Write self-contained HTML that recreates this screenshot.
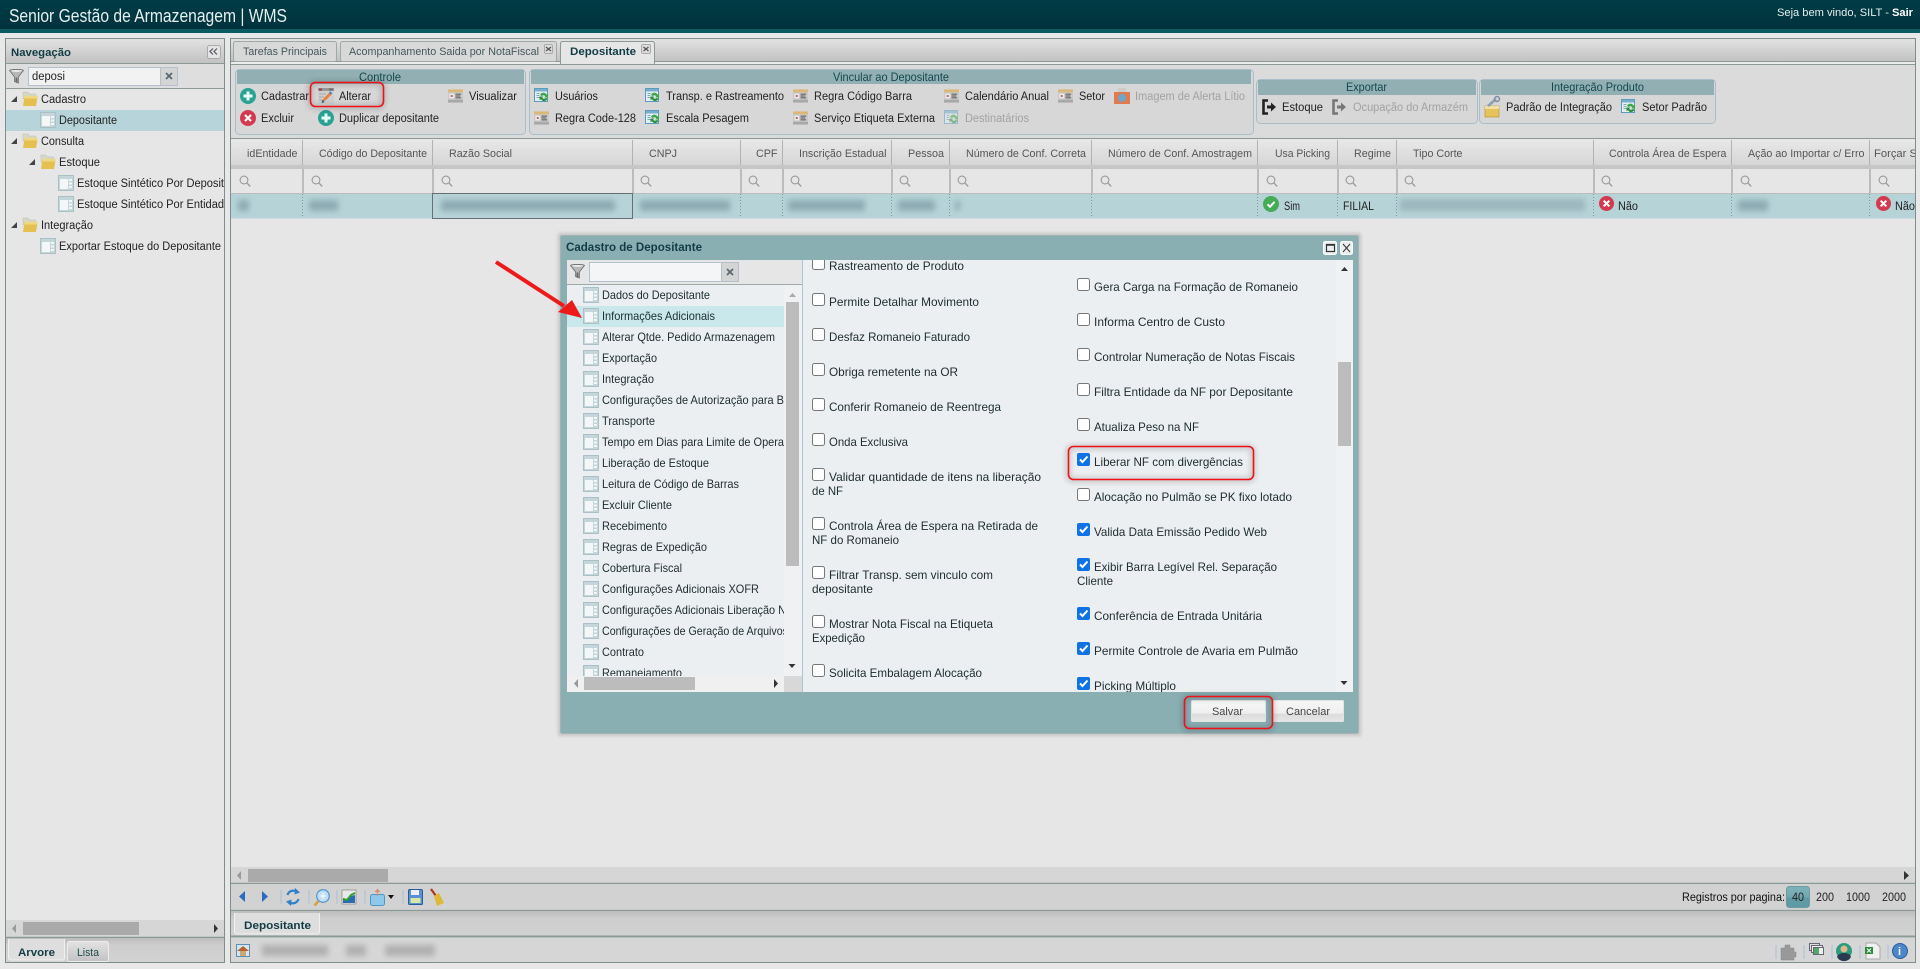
<!DOCTYPE html>
<html lang="pt-BR">
<head>
<meta charset="utf-8">
<title>Senior Gestão de Armazenagem | WMS</title>
<style>
html,body{margin:0;padding:0;width:1920px;height:969px;overflow:hidden;background:#e8e8e8}
svg{display:block;font-family:"Liberation Sans",Arial,sans-serif;font-size:11px;fill:#2a2a2a}
.h{fill:#555;font-size:11px}
.t{fill:#222;font-size:11.5px}
.b{font-weight:bold;fill:#123c44}
.g{fill:#a2a2a2}
.c{fill:#12484e;font-size:12px}
.d{fill:#1c2c30;font-size:12px}
</style>
</head>
<body>
<svg xmlns="http://www.w3.org/2000/svg" width="1920" height="969" viewBox="0 0 1920 969">
<defs>
<linearGradient id="ghd" x1="0" y1="0" x2="0" y2="1"><stop offset="0" stop-color="#003d47"/><stop offset="1" stop-color="#00323c"/></linearGradient>
<linearGradient id="gt" x1="0" y1="0" x2="0" y2="1"><stop offset="0" stop-color="#e2e2e2"/><stop offset="1" stop-color="#c2c2c2"/></linearGradient>
<linearGradient id="gb" x1="0" y1="0" x2="0" y2="1"><stop offset="0" stop-color="#bdbdbd"/><stop offset=".3" stop-color="#cdcdcd"/><stop offset="1" stop-color="#d2d2d2"/></linearGradient>
<linearGradient id="gh" x1="0" y1="0" x2="0" y2="1"><stop offset="0" stop-color="#e8e8e8"/><stop offset="1" stop-color="#d6d6d6"/></linearGradient>
<linearGradient id="gq" x1="0" y1="0" x2="0" y2="1"><stop offset="0" stop-color="#7db2b9"/><stop offset=".5" stop-color="#72a9b1"/><stop offset=".55" stop-color="#5f9ba4"/><stop offset="1" stop-color="#5f9ba4"/></linearGradient>
<linearGradient id="gw" x1="0" y1="0" x2="0" y2="1"><stop offset="0" stop-color="#f6f6f6"/><stop offset=".6" stop-color="#f0f0f0"/><stop offset=".65" stop-color="#dcdcdc"/><stop offset="1" stop-color="#e6e6e6"/></linearGradient>
<filter id="bl" x="-30%" y="-100%" width="160%" height="300%"><feGaussianBlur stdDeviation="3"/></filter>
<filter id="sh" x="-5%" y="-5%" width="110%" height="110%"><feGaussianBlur stdDeviation="3"/></filter>
<filter id="sd" x="-2%" y="-2%" width="104%" height="104%"><feGaussianBlur stdDeviation="1.500"/></filter>
<clipPath id="cNav"><rect x="6" y="89" width="218" height="830"/></clipPath>
<clipPath id="cDlgL"><rect x="567" y="285" width="217" height="391"/></clipPath>
<clipPath id="cDlgR"><rect x="803" y="260" width="532" height="432"/></clipPath>
<clipPath id="cGrid"><rect x="231" y="140" width="1684" height="80"/></clipPath>
<symbol id="pg" viewBox="0 0 16 16"><rect x=".5" y=".5" width="15" height="15" fill="#c4d6da" stroke="#a9c0c5"/><rect x="2" y="4" width="8" height="10" fill="#f3f7f8"/><rect x="11" y="4" width="3" height="2" fill="#f3f7f8"/><rect x="11" y="7.5" width="3" height="2" fill="#f3f7f8"/><rect x="11" y="11" width="3" height="2" fill="#f3f7f8"/></symbol>
<symbol id="fo" viewBox="0 0 16 16"><path d="M1 1h5l1 2h7v5H1z" fill="#d8d8c0" stroke="#bbb" stroke-width=".5"/><path d="M2.500 5h13.200L14 15H1z" fill="#e4c050"/><path d="M2.500 5h13.200l-.4 2.500H2.100z" fill="#f0d880"/></symbol>
<symbol id="pl" viewBox="0 0 16 16"><circle cx="8" cy="8" r="8" fill="#2aa293"/><path d="M8 3.500v9M3.500 8h9" stroke="#e8fff8" stroke-width="3"/></symbol>
<symbol id="xc" viewBox="0 0 16 16"><circle cx="8" cy="8" r="8" fill="#d33a50"/><path d="M5 5l6 6M11 5l-6 6" stroke="#fff" stroke-width="2.200"/></symbol>
<symbol id="ok" viewBox="0 0 16 16"><circle cx="8" cy="8" r="8" fill="#43ac55"/><path d="M4.500 8.300l2.500 2.500 4.500-5" stroke="#fff" stroke-width="2" fill="none"/></symbol>
<symbol id="tb" viewBox="0 0 16 14"><rect width="16" height="14" fill="#c9c9c9"/><rect width="16" height="3" fill="#dbb878"/><rect x="0" y="11" width="16" height="3" fill="#a8a8a8"/><rect x="1.500" y="4.500" width="5" height="5" fill="#e9e9e9"/><rect x="3" y="6" width="2" height="2" fill="#c05858"/><path d="M8 5h6M8 7h5M8 9h6" stroke="#555" stroke-width="1"/></symbol>
<symbol id="rf" viewBox="0 0 16 16"><rect x=".5" y=".5" width="13" height="13" fill="#e6f0f4" stroke="#5b9bc0"/><rect x="1" y="1" width="12" height="2.500" fill="#79aecb"/><path d="M2.500 5.500h3M2.500 7.500h3M2.500 9.500h3" stroke="#7ba8be"/><path d="M6 6.500c2-2.500 5-2.500 6.500 0l1.500-1v4h-4l1.300-1.200c-1-1.300-2.800-1.300-3.800 0z" fill="#41a64a"/><path d="M13.500 11c-2 2.800-5 2.800-6.500.3l-1.500 1V8.500h4L8.200 9.700c1 1.300 2.800 1.300 3.800 0z" fill="#2f8f3c"/></symbol>
<symbol id="ed" viewBox="0 0 16 16"><rect width="16" height="16" fill="#cfcfcf"/><rect width="16" height="3" fill="#9a9a9a"/><rect x="1" y=".5" width="3" height="2" fill="#b03838"/><rect x="11" y=".5" width="4" height="2" fill="#707070"/><path d="M1 6h7M1 9h5M1 12h4" stroke="#aaa"/><path d="M4 14l2-4 6-6 2 2-6 6z" fill="#e8803c"/><path d="M11 4.500l1.200-1.200 2 2-1.200 1.200z" fill="#3a7cc0"/><path d="M3.500 15l1-3.200 2.200 2.200z" fill="#3b5560"/></symbol>
<symbol id="ex" viewBox="0 0 14 16"><path d="M6 1.500H1.500v13H6" fill="none" stroke="#222" stroke-width="2.600"/><path d="M5 6.500h4V3.500L14 8l-5 4.500v-3H5z" fill="#222"/></symbol>
<symbol id="ex2" viewBox="0 0 14 16"><path d="M6 1.500H1.500v13H6" fill="none" stroke="#777" stroke-width="2.600"/><path d="M5 6.500h4V3.500L14 8l-5 4.500v-3H5z" fill="#777"/></symbol>
<symbol id="sr" viewBox="0 0 12 12"><circle cx="5" cy="5" r="3.900" fill="none" stroke="#9a9a9a" stroke-width="1.100"/><path d="M8 8l3.200 3.400" stroke="#9a9a9a" stroke-width="1.300"/></symbol>
<symbol id="fn" viewBox="0 0 16 16"><path d="M.5 1.500c2-1.500 13-1.500 15 0L10 8.500V15l-4-1.500V8.500z" fill="#b8b8b8" stroke="#666" stroke-width=".8"/><path d="M1.500 2c3-1 10-1 13 0-3 1.300-10 1.300-13 0z" fill="#f2f2f2"/><path d="M7 9v5l2 .6V9z" fill="#666"/></symbol>
</defs>

<!-- header -->
<rect width="1920" height="29" fill="url(#ghd)"/>
<rect y="29" width="1920" height="4" fill="#0a5c62"/>
<text x="9" y="22" font-size="18" fill="#e6eef0" textLength="278" lengthAdjust="spacingAndGlyphs">Senior Gestão de Armazenagem | WMS</text>
<text x="1777" y="16" fill="#e6eef0" textLength="136" lengthAdjust="spacingAndGlyphs">Seja bem vindo, SILT - <tspan font-weight="bold" fill="#fff">Sair</tspan></text>

<!-- left panel -->
<rect x="5.500" y="38.500" width="219" height="924" fill="#e6e6e6" stroke="#7e8f8b"/>
<rect x="6" y="39" width="218" height="24" fill="url(#gt)"/>
<path d="M6 63.500h218" stroke="#8c9a96"/>
<text x="11" y="56" class="b" font-size="11" textLength="60" lengthAdjust="spacingAndGlyphs">Navegação</text>
<rect x="207.500" y="45.500" width="13" height="13" rx="2" fill="#e4e4e4" stroke="#aaa"/>
<path d="M213 48.500l-3 3 3 3M217 48.500l-3 3 3 3" fill="none" stroke="#556" stroke-width="1.200"/>
<rect x="6" y="64" width="218" height="24" fill="#dedede"/>
<path d="M6 88.500h218" stroke="#909c98"/>
<use href="#fn" x="9" y="69" width="15" height="15"/>
<rect x="28.500" y="67.500" width="132" height="18" fill="#f2f2f2" stroke="#b4c0cc"/>
<rect x="160.500" y="67.500" width="17" height="18" fill="#d4d4d4" stroke="#b4c0cc"/>
<path d="M166 73l6 6M172 73l-6 6" stroke="#5a6a70" stroke-width="1.800"/>
<text x="32" y="80" class="t" font-size="12" textLength="33" lengthAdjust="spacingAndGlyphs">deposi</text>
<rect x="6" y="110" width="218" height="21" fill="#b6d4d9"/>
<g clip-path="url(#cNav)" class="t">
<path d="M11 102l6-6v6zM11 144l6-6v6zM29 165l6-6v6zM11 228l6-6v6z" fill="#444"/>
<use href="#fo" x="22" y="91" width="16" height="16"/>
<use href="#fo" x="22" y="133" width="16" height="16"/>
<use href="#fo" x="40" y="154" width="16" height="16"/>
<use href="#fo" x="22" y="217" width="16" height="16"/>
<use href="#pg" x="40" y="112" width="16" height="16"/>
<use href="#pg" x="58" y="175" width="16" height="16"/>
<use href="#pg" x="58" y="196" width="16" height="16"/>
<use href="#pg" x="40" y="238" width="16" height="16"/>
<text x="41" y="103" textLength="45" lengthAdjust="spacingAndGlyphs">Cadastro</text>
<text x="59" y="124" textLength="58" lengthAdjust="spacingAndGlyphs">Depositante</text>
<text x="41" y="145" textLength="43" lengthAdjust="spacingAndGlyphs">Consulta</text>
<text x="59" y="166" textLength="41" lengthAdjust="spacingAndGlyphs">Estoque</text>
<text x="77" y="187" textLength="147" lengthAdjust="spacingAndGlyphs">Estoque Sintético Por Deposit</text>
<text x="77" y="208" textLength="147" lengthAdjust="spacingAndGlyphs">Estoque Sintético Por Entidad</text>
<text x="41" y="229" textLength="52" lengthAdjust="spacingAndGlyphs">Integração</text>
<text x="59" y="250" textLength="162" lengthAdjust="spacingAndGlyphs">Exportar Estoque do Depositante</text>
</g>
<rect x="6" y="920" width="218" height="17" fill="#d6d6d6"/>
<rect x="23" y="922" width="116" height="13" fill="#aaa"/>
<path d="M16 924l-4 4.500 4 4.500z" fill="#999"/><path d="M214 924l4 4.500-4 4.500z" fill="#333"/>
<path d="M6 937.500h218" stroke="#8a9a96" stroke-width="1.500"/>
<rect x="6" y="938" width="218" height="24" fill="url(#gb)"/>
<path d="M8.500 939v19a2 2 0 0 0 2 2h52a2 2 0 0 0 2-2v-19" fill="#dedede" stroke="#f0f0f0"/>
<rect x="67.500" y="941.500" width="41" height="20" rx="2" fill="url(#gt)" stroke="#ececec"/>
<text x="18" y="956" class="b" textLength="37" lengthAdjust="spacingAndGlyphs">Arvore</text>
<text x="77" y="956" fill="#1f4a50" textLength="22" lengthAdjust="spacingAndGlyphs">Lista</text>

<!-- right panel -->
<rect x="230.500" y="38.500" width="1685" height="924" fill="#e6e6e6" stroke="#7e8f8b"/>
<rect x="231" y="39" width="1684" height="22" fill="url(#gt)"/>
<path d="M231 61.500h1684M231 64.500h1684" stroke="#8c9a96"/>
<rect x="231" y="62" width="1684" height="2" fill="#ececec"/>
<rect x="233.500" y="41.500" width="103" height="20" rx="2" fill="#d8d8d8" stroke="#9fa9a6"/>
<rect x="340.500" y="41.500" width="216" height="20" rx="2" fill="#d8d8d8" stroke="#9fa9a6"/>
<path d="M560.500 64v-20.500a2 2 0 0 1 2-2h90a2 2 0 0 1 2 2V64" fill="#e6e6e6" stroke="#8c9a96"/>
<text x="243" y="55" fill="#44585c" textLength="84" lengthAdjust="spacingAndGlyphs">Tarefas Principais</text>
<text x="349" y="55" fill="#44585c" textLength="190" lengthAdjust="spacingAndGlyphs">Acompanhamento Saida por NotaFiscal</text>
<text x="570" y="55" class="b" textLength="66" lengthAdjust="spacingAndGlyphs">Depositante</text>
<g fill="#ddd" stroke="#aaa"><rect x="544.500" y="44.500" width="8" height="9" rx="1.500"/><rect x="641.500" y="44.500" width="9" height="9" rx="1.500"/></g>
<path d="M546 47l5 4M551 47l-5 4M643.500 47l5 4M648.500 47l-5 4" stroke="#555" stroke-width="1.300"/>

<!-- toolbar -->
<rect x="231" y="65" width="1684" height="73" fill="#dbdbdb"/>
<path d="M231 138.500h1684" stroke="#8c9a96"/>
<g fill="#d7d7d7" stroke="#a9bdca">
<rect x="235.500" y="69.500" width="290" height="65" rx="4"/>
<rect x="529.500" y="69.500" width="724" height="65" rx="4"/>
<rect x="1256.500" y="79.500" width="221" height="44" rx="4"/>
<rect x="1479.500" y="79.500" width="236" height="44" rx="4"/>
</g>
<g fill="#92b0b3">
<rect x="237" y="70" width="287" height="14"/>
<rect x="531" y="70" width="720" height="14"/>
<rect x="1258" y="80" width="218" height="15"/>
<rect x="1481" y="80" width="233" height="15"/>
</g>
<g class="c">
<text x="359" y="81" textLength="42" lengthAdjust="spacingAndGlyphs">Controle</text>
<text x="833" y="81" textLength="116" lengthAdjust="spacingAndGlyphs">Vincular ao Depositante</text>
<text x="1346" y="91" textLength="41" lengthAdjust="spacingAndGlyphs">Exportar</text>
<text x="1551" y="91" textLength="93" lengthAdjust="spacingAndGlyphs">Integração Produto</text>
</g>
<use href="#pl" x="240" y="88" width="16" height="16"/>
<use href="#xc" x="240" y="110" width="16" height="16"/>
<use href="#ed" x="318" y="88" width="16" height="16"/>
<use href="#pl" x="318" y="110" width="16" height="16"/>
<use href="#tb" x="448" y="89" width="15" height="14"/>
<use href="#rf" x="534" y="88" width="16" height="16"/>
<use href="#tb" x="534" y="111" width="15" height="14"/>
<use href="#rf" x="645" y="88" width="16" height="16"/>
<use href="#rf" x="645" y="110" width="16" height="16"/>
<use href="#tb" x="793" y="89" width="15" height="14"/>
<use href="#tb" x="793" y="111" width="15" height="14"/>
<use href="#tb" x="944" y="89" width="15" height="14"/>
<use href="#rf" x="944" y="110" width="16" height="16" opacity=".5"/>
<use href="#tb" x="1058" y="89" width="15" height="14"/>
<g><rect x="1114" y="92" width="16" height="12" fill="#e07a50"/><rect x="1118" y="88" width="8" height="4" fill="#ccc"/><circle cx="1122" cy="98" r="4" fill="#6aa8c8"/></g>
<use href="#ex" x="1262" y="99" width="14" height="16"/>
<use href="#ex2" x="1332" y="99" width="14" height="16"/>
<g><rect x="1485" y="106" width="14" height="11" fill="#e6c25a" stroke="#b89030" stroke-width=".6"/><rect x="1485" y="106" width="14" height="3" fill="#f2e0a0"/><path d="M1488 106l8-7" stroke="#8aa0b0" stroke-width="2.500"/><circle cx="1497" cy="99" r="2.500" fill="none" stroke="#8090a0" stroke-width="1.500"/></g>
<use href="#rf" x="1621" y="99" width="16" height="16"/>
<g class="t" font-size="11.500">
<text x="261" y="100" textLength="48" lengthAdjust="spacingAndGlyphs">Cadastrar</text>
<text x="339" y="100" textLength="32" lengthAdjust="spacingAndGlyphs">Alterar</text>
<text x="469" y="100" textLength="48" lengthAdjust="spacingAndGlyphs">Visualizar</text>
<text x="261" y="122" textLength="33" lengthAdjust="spacingAndGlyphs">Excluir</text>
<text x="339" y="122" textLength="100" lengthAdjust="spacingAndGlyphs">Duplicar depositante</text>
<text x="555" y="100" textLength="43" lengthAdjust="spacingAndGlyphs">Usuários</text>
<text x="555" y="122" textLength="81" lengthAdjust="spacingAndGlyphs">Regra Code-128</text>
<text x="666" y="100" textLength="118" lengthAdjust="spacingAndGlyphs">Transp. e Rastreamento</text>
<text x="666" y="122" textLength="83" lengthAdjust="spacingAndGlyphs">Escala Pesagem</text>
<text x="814" y="100" textLength="98" lengthAdjust="spacingAndGlyphs">Regra Código Barra</text>
<text x="814" y="122" textLength="121" lengthAdjust="spacingAndGlyphs">Serviço Etiqueta Externa</text>
<text x="965" y="100" textLength="84" lengthAdjust="spacingAndGlyphs">Calendário Anual</text>
<text x="965" y="122" class="g" textLength="64" lengthAdjust="spacingAndGlyphs">Destinatários</text>
<text x="1079" y="100" textLength="26" lengthAdjust="spacingAndGlyphs">Setor</text>
<text x="1135" y="100" class="g" textLength="110" lengthAdjust="spacingAndGlyphs">Imagem de Alerta Lítio</text>
<text x="1282" y="111" textLength="41" lengthAdjust="spacingAndGlyphs">Estoque</text>
<text x="1353" y="111" class="g" textLength="115" lengthAdjust="spacingAndGlyphs">Ocupação do Armazém</text>
<text x="1506" y="111" textLength="106" lengthAdjust="spacingAndGlyphs">Padrão de Integração</text>
<text x="1642" y="111" textLength="65" lengthAdjust="spacingAndGlyphs">Setor Padrão</text>
</g>

<!-- grid -->
<rect x="231" y="140" width="1684" height="25" fill="url(#gh)"/>
<rect x="231" y="165" width="1684" height="4" fill="#c6c6c6"/>
<rect x="231" y="169" width="1684" height="24" fill="#e6e6e6"/>
<rect x="231" y="193" width="1684" height="1" fill="#bdbdbd"/>
<rect x="231" y="194" width="1684" height="24.500" fill="#b6d3d8"/>
<g stroke="#b2b2b2" stroke-width="1">
<path d="M302.500 140v25M432.500 140v25M632.500 140v25M740.500 140v25M782.500 140v25M891.500 140v25M949.500 140v25M1091.500 140v25M1257.500 140v25M1337.500 140v25M1396.500 140v25M1593.500 140v25M1731.500 140v25M1869.500 140v25"/>
</g>
<g stroke="#bcbcbc" stroke-width="2">
<path d="M303 169v24M433 169v24M633 169v24M741 169v24M783 169v24M892 169v24M950 169v24M1092 169v24M1258 169v24M1338 169v24M1397 169v24M1594 169v24M1732 169v24M1870 169v24"/>
</g>
<g stroke="#82979c" stroke-width="1" stroke-dasharray="1 2">
<path d="M302.500 194v24M740.500 194v24M782.500 194v24M891.500 194v24M949.500 194v24M1091.500 194v24M1257.500 194v24M1337.500 194v24M1396.500 194v24M1593.500 194v24M1731.500 194v24M1869.500 194v24"/>
</g>
<path d="M432.500 193.500h200v25h-200z" fill="none" stroke="#667074"/>
<g clip-path="url(#cGrid)">
<g class="h">
<text x="247" y="157" textLength="50.500" lengthAdjust="spacingAndGlyphs">idEntidade</text>
<text x="319" y="157" textLength="108" lengthAdjust="spacingAndGlyphs">Código do Depositante</text>
<text x="449" y="157" textLength="63" lengthAdjust="spacingAndGlyphs">Razão Social</text>
<text x="649" y="157" textLength="28" lengthAdjust="spacingAndGlyphs">CNPJ</text>
<text x="756" y="157" textLength="21.500" lengthAdjust="spacingAndGlyphs">CPF</text>
<text x="799" y="157" textLength="87.500" lengthAdjust="spacingAndGlyphs">Inscrição Estadual</text>
<text x="908" y="157" textLength="36" lengthAdjust="spacingAndGlyphs">Pessoa</text>
<text x="966" y="157" textLength="120" lengthAdjust="spacingAndGlyphs">Número de Conf. Correta</text>
<text x="1108" y="157" textLength="144" lengthAdjust="spacingAndGlyphs">Número de Conf. Amostragem</text>
<text x="1275" y="157" textLength="55" lengthAdjust="spacingAndGlyphs">Usa Picking</text>
<text x="1354" y="157" textLength="37" lengthAdjust="spacingAndGlyphs">Regime</text>
<text x="1413" y="157" textLength="49.500" lengthAdjust="spacingAndGlyphs">Tipo Corte</text>
<text x="1609" y="157" textLength="117.500" lengthAdjust="spacingAndGlyphs">Controla Área de Espera</text>
<text x="1748" y="157" textLength="116.500" lengthAdjust="spacingAndGlyphs">Ação ao Importar c/ Erro</text>
<text x="1874" y="157" textLength="43" lengthAdjust="spacingAndGlyphs">Forçar S</text>
</g>
<g>
<use href="#sr" x="239" y="175" width="12" height="12"/><use href="#sr" x="311" y="175" width="12" height="12"/><use href="#sr" x="441" y="175" width="12" height="12"/><use href="#sr" x="640" y="175" width="12" height="12"/><use href="#sr" x="748" y="175" width="12" height="12"/><use href="#sr" x="790" y="175" width="12" height="12"/><use href="#sr" x="899" y="175" width="12" height="12"/><use href="#sr" x="957" y="175" width="12" height="12"/><use href="#sr" x="1100" y="175" width="12" height="12"/><use href="#sr" x="1266" y="175" width="12" height="12"/><use href="#sr" x="1345" y="175" width="12" height="12"/><use href="#sr" x="1404" y="175" width="12" height="12"/><use href="#sr" x="1601" y="175" width="12" height="12"/><use href="#sr" x="1740" y="175" width="12" height="12"/><use href="#sr" x="1878" y="175" width="12" height="12"/>
</g>
<g filter="url(#bl)" fill="#8eabb3">
<rect x="238" y="200" width="11" height="11"/><rect x="309" y="200" width="29" height="11"/><rect x="441" y="200" width="174" height="11"/><rect x="640" y="200" width="90" height="11"/><rect x="788" y="200" width="77" height="11"/><rect x="898" y="200" width="37" height="11"/><rect x="955" y="201" width="5" height="9"/><rect x="1400" y="199" width="185" height="12" fill="#9cb8be"/><rect x="1738" y="200" width="30" height="11"/>
</g>
<use href="#ok" x="1263" y="196" width="16" height="16"/>
<text x="1284" y="210" class="t" textLength="16" lengthAdjust="spacingAndGlyphs">Sim</text>
<text x="1343" y="210" class="t" textLength="31" lengthAdjust="spacingAndGlyphs">FILIAL</text>
<use href="#xc" x="1599" y="196" width="15" height="15"/>
<text x="1618" y="210" class="t" textLength="20" lengthAdjust="spacingAndGlyphs">Não</text>
<use href="#xc" x="1876" y="196" width="15" height="15"/>
<text x="1895" y="210" class="t" textLength="20" lengthAdjust="spacingAndGlyphs">Não</text>
</g>

<!-- Grid bottom -->
<rect x="231" y="867" width="1684" height="16" fill="#d6d6d6"/>
<rect x="248" y="869" width="140" height="13" fill="#aaa"/>
<path d="M241 871l-4 4.500 4 4.500z" fill="#999"/><path d="M1904 871l5 4.500-5 4.500z" fill="#333"/>
<path d="M231 883.500h1684" stroke="#8a9a96" stroke-width="1.500"/>
<rect x="231" y="884" width="1684" height="26" fill="#d2d2d2"/>
<path d="M231 910.500h1684" stroke="#8a9a96" stroke-width="1.200"/>
<path d="M245 891l-6 5.500 6 5.500z" fill="#2c6cc0"/><path d="M262 891l6 5.500-6 5.500z" fill="#2c6cc0"/>
<path d="M281 890v14M309 890v14M337 890v14M365 890v14M403 890v14" stroke="#a8c0d8"/>
<g fill="none" stroke="#2f80c8" stroke-width="2.200"><path d="M287.500 895a6 6 0 0 1 9.500-3"/><path d="M298.500 899a6 6 0 0 1-9.500 3"/></g>
<path d="M295 888l5 4.500-5.500 2zM291 906l-5-4.500 5.500-2z" fill="#2f80c8"/>
<circle cx="323" cy="896" r="6.300" fill="#bfe0f8" stroke="#5a98d0" stroke-width="1.300"/><path d="M318.500 901l-4 4.500" stroke="#d8a040" stroke-width="2.500"/><path d="M320 896h6M323 893v6" stroke="#fff"/>
<rect x="342" y="890" width="14" height="14" fill="#e8e8e8" stroke="#777" stroke-width=".6"/><path d="M343 903v-5l4 2 4-4 4-1v8z" fill="#2a6cb0"/><path d="M343 899l4 1 4-5 4-2" fill="none" stroke="#30a030" stroke-width="2"/>
<rect x="370.500" y="894.500" width="14" height="11" rx="2" fill="#8fc8e8" stroke="#4a98c8"/><path d="M377.500 896v-5" stroke="#d89078" stroke-width="1.500"/><path d="M374.500 892l3-3.500 3 3.500z" fill="#d89078"/>
<path d="M388 895h6l-3 4z" fill="#111"/>
<rect x="408.500" y="889.500" width="14" height="15" rx="1" fill="#5c90d0" stroke="#2a5c9c"/><rect x="411" y="890" width="8" height="5" fill="#eef"/><rect x="410.500" y="898" width="10" height="5" fill="#d8e8a8"/>
<path d="M431 889l5 7" stroke="#a83820" stroke-width="2.200"/><path d="M434 896l5-3 5 10-7 3z" fill="#e0b838"/>
<text x="1682" y="901" fill="#111" font-size="11.500" textLength="103" lengthAdjust="spacingAndGlyphs">Registros por pagina:</text>
<rect x="1786.500" y="886.500" width="23" height="21" rx="3" fill="url(#gq)" stroke="#6d9aa0"/>
<g fill="#222" font-size="11.500">
<text x="1792" y="901" textLength="12" lengthAdjust="spacingAndGlyphs">40</text>
<text x="1816" y="901" textLength="18" lengthAdjust="spacingAndGlyphs">200</text>
<text x="1846" y="901" textLength="24" lengthAdjust="spacingAndGlyphs">1000</text>
<text x="1882" y="901" textLength="24" lengthAdjust="spacingAndGlyphs">2000</text>
</g>
<rect x="231" y="911" width="1684" height="25" fill="url(#gb)"/>
<path d="M234.500 913v19a2 2 0 0 0 2 2h81a2 2 0 0 0 2-2v-19" fill="#dedede" stroke="#f0f0f0"/>
<text x="244" y="929" class="b" textLength="67" lengthAdjust="spacingAndGlyphs">Depositante</text>
<path d="M231 936.500h1684" stroke="#8a9a96" stroke-width="2"/>
<rect x="231" y="938" width="1684" height="24" fill="#d6d6d6"/>
<rect x="236.500" y="944.500" width="13" height="12" fill="#d8e4ec" stroke="#5a90b8"/><path d="M237 951l6-5 6 5z" fill="#b86030"/><rect x="240" y="951" width="6" height="5" fill="#c8a878"/>
<g filter="url(#bl)" fill="#b0b0b0"><rect x="262" y="945" width="66" height="11"/><rect x="346" y="945" width="20" height="11"/><rect x="385" y="945" width="50" height="11"/></g>
<path d="M1776 945v14M1804 945v14M1832 945v14M1860 945v14M1888 945v14" stroke="#a8c0d8"/>
<path d="M1781 948h4v-3h5v3h4v4h2v5h-2v3h-13z" fill="#999" stroke="#888" stroke-width=".5"/>
<rect x="1809.500" y="943.500" width="10" height="7" fill="#ddd" stroke="#667"/><rect x="1811.500" y="945.500" width="11" height="7" fill="#eee" stroke="#667"/><rect x="1813.500" y="947.500" width="10" height="7" fill="#eee" stroke="#667"/><rect x="1814" y="948" width="5" height="6" fill="#52a868"/>
<circle cx="1844" cy="951" r="8" fill="#2c9d7c"/><path d="M1837 957c1-3 4-4 7-4s6 1 7 4a8 8 0 0 1-14 0z" fill="#2a3a50"/><circle cx="1844" cy="949" r="3.500" fill="#e0b890"/>
<path d="M1866 943h10l4 4v12h-14z" fill="#f0f0f0" stroke="#aaa"/><rect x="1865" y="947" width="8" height="7" fill="#2a8a3c"/><path d="M1867 948.500l4 4M1871 948.500l-4 4" stroke="#fff"/>
<circle cx="1900" cy="951" r="7.500" fill="#4a88c8" stroke="#2a5ca0"/><text x="1898" y="955" fill="#fff" font-size="11" font-weight="bold">i</text>

<!-- dialog -->
<rect x="558" y="233" width="803" height="503" fill="#000" opacity=".14" filter="url(#sd)"/>
<rect x="560.500" y="235.500" width="798" height="498" rx="2" fill="#8aafb3" stroke="#a4b4b4"/>
<text x="566" y="251" class="b" font-size="12" textLength="136" lengthAdjust="spacingAndGlyphs" fill="#1a3a42">Cadastro de Depositante</text>
<rect x="1323.500" y="241.500" width="13" height="13" rx="2" fill="#eaf0f0" stroke="#fff"/><rect x="1326.500" y="244.500" width="8" height="7" fill="none" stroke="#333" stroke-width="1.200"/><path d="M1326 245h9" stroke="#333" stroke-width="1.500"/>
<rect x="1340.500" y="241.500" width="12" height="13" rx="2" fill="#eaf0f0" stroke="#fff"/><path d="M1343 244l7 8M1350 244l-7 8" stroke="#333"/>
<rect x="567" y="260" width="786" height="432" fill="#eceff1"/>
<rect x="567" y="260" width="235" height="24" fill="#e6e6e6"/>
<path d="M567 284.500h235" stroke="#9fa9a8"/>
<path d="M802.500 260v432" stroke="#a9c4dc"/>
<use href="#fn" x="570" y="264" width="15" height="15"/>
<rect x="589.500" y="262.500" width="132" height="19" fill="#f3f5f6" stroke="#b4c0cc"/>
<rect x="721.500" y="262.500" width="17" height="19" fill="#d4d4d4" stroke="#b4c0cc"/>
<path d="M727 269l6 6M733 269l-6 6" stroke="#5a6a70" stroke-width="1.800"/>
<rect x="567" y="306" width="217" height="21" fill="#c8e8ec"/>
<g clip-path="url(#cDlgL)" class="d">
<use href="#pg" x="583" y="287" width="16" height="16"/><use href="#pg" x="583" y="308" width="16" height="16"/><use href="#pg" x="583" y="329" width="16" height="16"/><use href="#pg" x="583" y="350" width="16" height="16"/><use href="#pg" x="583" y="371" width="16" height="16"/><use href="#pg" x="583" y="392" width="16" height="16"/><use href="#pg" x="583" y="413" width="16" height="16"/><use href="#pg" x="583" y="434" width="16" height="16"/><use href="#pg" x="583" y="455" width="16" height="16"/><use href="#pg" x="583" y="476" width="16" height="16"/><use href="#pg" x="583" y="497" width="16" height="16"/><use href="#pg" x="583" y="518" width="16" height="16"/><use href="#pg" x="583" y="539" width="16" height="16"/><use href="#pg" x="583" y="560" width="16" height="16"/><use href="#pg" x="583" y="581" width="16" height="16"/><use href="#pg" x="583" y="602" width="16" height="16"/><use href="#pg" x="583" y="623" width="16" height="16"/><use href="#pg" x="583" y="644" width="16" height="16"/><use href="#pg" x="583" y="665" width="16" height="16"/>
<text x="602" y="299" textLength="108" lengthAdjust="spacingAndGlyphs">Dados do Depositante</text>
<text x="602" y="320" textLength="113" lengthAdjust="spacingAndGlyphs">Informações Adicionais</text>
<text x="602" y="341" textLength="173" lengthAdjust="spacingAndGlyphs">Alterar Qtde. Pedido Armazenagem</text>
<text x="602" y="362" textLength="55" lengthAdjust="spacingAndGlyphs">Exportação</text>
<text x="602" y="383" textLength="52" lengthAdjust="spacingAndGlyphs">Integração</text>
<text x="602" y="404" textLength="182" lengthAdjust="spacingAndGlyphs">Configurações de Autorização para B</text>
<text x="602" y="425" textLength="53" lengthAdjust="spacingAndGlyphs">Transporte</text>
<text x="602" y="446" textLength="182" lengthAdjust="spacingAndGlyphs">Tempo em Dias para Limite de Opera</text>
<text x="602" y="467" textLength="107" lengthAdjust="spacingAndGlyphs">Liberação de Estoque</text>
<text x="602" y="488" textLength="137" lengthAdjust="spacingAndGlyphs">Leitura de Código de Barras</text>
<text x="602" y="509" textLength="70" lengthAdjust="spacingAndGlyphs">Excluir Cliente</text>
<text x="602" y="530" textLength="65" lengthAdjust="spacingAndGlyphs">Recebimento</text>
<text x="602" y="551" textLength="105" lengthAdjust="spacingAndGlyphs">Regras de Expedição</text>
<text x="602" y="572" textLength="80" lengthAdjust="spacingAndGlyphs">Cobertura Fiscal</text>
<text x="602" y="593" textLength="157" lengthAdjust="spacingAndGlyphs">Configurações Adicionais XOFR</text>
<text x="602" y="614" textLength="184" lengthAdjust="spacingAndGlyphs">Configurações Adicionais Liberação N</text>
<text x="602" y="635" textLength="186" lengthAdjust="spacingAndGlyphs">Configurações de Geração de Arquivos</text>
<text x="602" y="656" textLength="42" lengthAdjust="spacingAndGlyphs">Contrato</text>
<text x="602" y="677" textLength="80" lengthAdjust="spacingAndGlyphs">Remanejamento</text>
</g>
<rect x="784" y="285" width="18" height="391" fill="#eff1f2"/>
<rect x="786" y="302" width="13" height="264" fill="#bcbcbc"/>
<path d="M789 297l3.500-4 3.500 4z" fill="#aaa"/><path d="M788.500 664h7l-3.500 4z" fill="#333"/>
<rect x="567" y="676" width="217" height="16" fill="#f0f0f0"/>
<rect x="584" y="677" width="111" height="13" fill="#bcbcbc"/>
<path d="M578 679l-4 4.500 4 4.500z" fill="#999"/><path d="M774 679l4 4.500-4 4.500z" fill="#333"/>
<rect x="784" y="676" width="18" height="16" fill="#d8d8d8"/>

<g clip-path="url(#cDlgR)">
<g fill="#fff" stroke="#777" stroke-width="1">
<rect x="812.500" y="257.500" width="12" height="12" rx="2"/><rect x="812.500" y="293.500" width="12" height="12" rx="2"/><rect x="812.500" y="328.500" width="12" height="12" rx="2"/><rect x="812.500" y="363.500" width="12" height="12" rx="2"/><rect x="812.500" y="398.500" width="12" height="12" rx="2"/><rect x="812.500" y="433.500" width="12" height="12" rx="2"/><rect x="812.500" y="468.500" width="12" height="12" rx="2"/><rect x="812.500" y="517.500" width="12" height="12" rx="2"/><rect x="812.500" y="566.500" width="12" height="12" rx="2"/><rect x="812.500" y="615.500" width="12" height="12" rx="2"/><rect x="812.500" y="664.500" width="12" height="12" rx="2"/>
<rect x="1077.500" y="278.500" width="12" height="12" rx="2"/><rect x="1077.500" y="313.500" width="12" height="12" rx="2"/><rect x="1077.500" y="348.500" width="12" height="12" rx="2"/><rect x="1077.500" y="383.500" width="12" height="12" rx="2"/><rect x="1077.500" y="418.500" width="12" height="12" rx="2"/><rect x="1077.500" y="488.500" width="12" height="12" rx="2"/>
</g>
<g fill="#0f72e5">
<rect x="1077" y="453" width="13" height="13" rx="2"/><rect x="1077" y="523" width="13" height="13" rx="2"/><rect x="1077" y="558" width="13" height="13" rx="2"/><rect x="1077" y="607" width="13" height="13" rx="2"/><rect x="1077" y="642" width="13" height="13" rx="2"/><rect x="1077" y="677" width="13" height="13" rx="2"/>
</g>
<g fill="none" stroke="#fff" stroke-width="2">
<path d="M1080 459.500l2.500 2.500 5-5.500M1080 529.500l2.500 2.500 5-5.500M1080 564.500l2.500 2.500 5-5.500M1080 613.500l2.500 2.500 5-5.500M1080 648.500l2.500 2.500 5-5.500M1080 683.500l2.500 2.500 5-5.500"/>
</g>
<g class="d">
<text x="829" y="270" textLength="135" lengthAdjust="spacingAndGlyphs">Rastreamento de Produto</text>
<text x="829" y="306" textLength="150" lengthAdjust="spacingAndGlyphs">Permite Detalhar Movimento</text>
<text x="829" y="341" textLength="141" lengthAdjust="spacingAndGlyphs">Desfaz Romaneio Faturado</text>
<text x="829" y="376" textLength="129" lengthAdjust="spacingAndGlyphs">Obriga remetente na OR</text>
<text x="829" y="411" textLength="172" lengthAdjust="spacingAndGlyphs">Conferir Romaneio de Reentrega</text>
<text x="829" y="446" textLength="79" lengthAdjust="spacingAndGlyphs">Onda Exclusiva</text>
<text x="829" y="481" textLength="212" lengthAdjust="spacingAndGlyphs">Validar quantidade de itens na liberação</text>
<text x="812" y="495" textLength="31" lengthAdjust="spacingAndGlyphs">de NF</text>
<text x="829" y="530" textLength="209" lengthAdjust="spacingAndGlyphs">Controla Área de Espera na Retirada de</text>
<text x="812" y="544" textLength="87" lengthAdjust="spacingAndGlyphs">NF do Romaneio</text>
<text x="829" y="579" textLength="164" lengthAdjust="spacingAndGlyphs">Filtrar Transp. sem vinculo com</text>
<text x="812" y="593" textLength="61" lengthAdjust="spacingAndGlyphs">depositante</text>
<text x="829" y="628" textLength="164" lengthAdjust="spacingAndGlyphs">Mostrar Nota Fiscal na Etiqueta</text>
<text x="812" y="642" textLength="53" lengthAdjust="spacingAndGlyphs">Expedição</text>
<text x="829" y="677" textLength="153" lengthAdjust="spacingAndGlyphs">Solicita Embalagem Alocação</text>
<text x="1094" y="291" textLength="204" lengthAdjust="spacingAndGlyphs">Gera Carga na Formação de Romaneio</text>
<text x="1094" y="326" textLength="131" lengthAdjust="spacingAndGlyphs">Informa Centro de Custo</text>
<text x="1094" y="361" textLength="201" lengthAdjust="spacingAndGlyphs">Controlar Numeração de Notas Fiscais</text>
<text x="1094" y="396" textLength="199" lengthAdjust="spacingAndGlyphs">Filtra Entidade da NF por Depositante</text>
<text x="1094" y="431" textLength="105" lengthAdjust="spacingAndGlyphs">Atualiza Peso na NF</text>
<text x="1094" y="466" textLength="149" lengthAdjust="spacingAndGlyphs">Liberar NF com divergências</text>
<text x="1094" y="501" textLength="198" lengthAdjust="spacingAndGlyphs">Alocação no Pulmão se PK fixo lotado</text>
<text x="1094" y="536" textLength="173" lengthAdjust="spacingAndGlyphs">Valida Data Emissão Pedido Web</text>
<text x="1094" y="571" textLength="183" lengthAdjust="spacingAndGlyphs">Exibir Barra Legível Rel. Separação</text>
<text x="1077" y="585" textLength="36" lengthAdjust="spacingAndGlyphs">Cliente</text>
<text x="1094" y="620" textLength="168" lengthAdjust="spacingAndGlyphs">Conferência de Entrada Unitária</text>
<text x="1094" y="655" textLength="204" lengthAdjust="spacingAndGlyphs">Permite Controle de Avaria em Pulmão</text>
<text x="1094" y="690" textLength="82" lengthAdjust="spacingAndGlyphs">Picking Múltiplo</text>
</g>
</g>
<rect x="1336" y="260" width="17" height="432" fill="#eff1f2"/>
<rect x="1338" y="362" width="13" height="84" fill="#bcbcbc"/>
<path d="M1341 271l3.500-4 3.500 4z" fill="#333"/><path d="M1340.500 681h7l-3.500 4z" fill="#333"/>
<rect x="1191.500" y="700.500" width="74" height="21" rx="1" fill="url(#gw)" stroke="#dfe4e4"/>
<rect x="1272.500" y="700.500" width="71" height="21" rx="1" fill="url(#gw)" stroke="#dfe4e4"/>
<text x="1212" y="715" fill="#444" textLength="31" lengthAdjust="spacingAndGlyphs">Salvar</text>
<text x="1286" y="715" fill="#444" textLength="44" lengthAdjust="spacingAndGlyphs">Cancelar</text>

<!-- annotations -->
<g fill="none" stroke="#000" opacity=".22" filter="url(#sh)" stroke-width="4">
<rect x="310" y="83" width="73" height="24" rx="5"/><rect x="1068" y="447" width="185" height="33" rx="5"/><rect x="1184" y="697" width="88" height="32" rx="5"/>
</g>
<g fill="none" stroke="#f01018" stroke-width="1.600">
<rect x="310.500" y="82.500" width="73" height="24" rx="5"/>
<rect x="1068.500" y="446.500" width="185" height="33" rx="5"/>
<rect x="1184.500" y="696.500" width="88" height="32" rx="5"/>
</g>
<path d="M496 262l68 44" stroke="#ee1a1a" stroke-width="4"/>
<path d="M582 318l-24-6 14-12z" fill="#ee1a1a"/>
</svg>
</body>
</html>
